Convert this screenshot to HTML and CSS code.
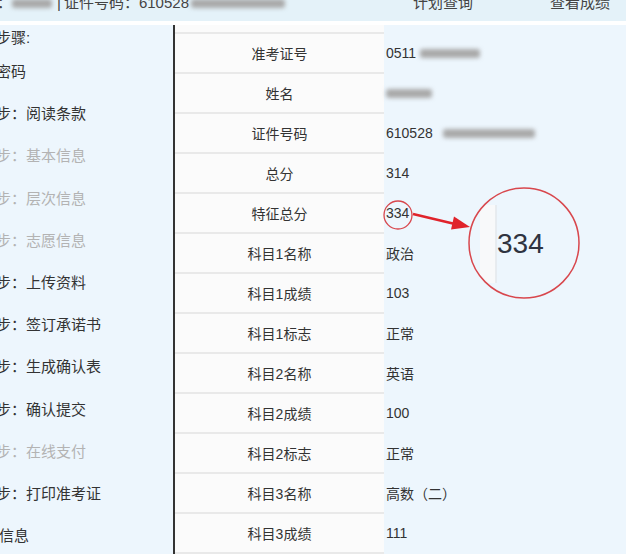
FILE: index.html
```html
<!DOCTYPE html>
<html lang="zh-CN">
<head>
<meta charset="utf-8">
<title>成绩查询</title>
<link rel="stylesheet" href="styles.css">
</head>
<body>
<div class="page">
  <header class="topbar">
    <div class="topbar-left">
      <span class="colon">：</span><span class="blur b-name"></span><span class="sep">|</span><span>证件号码：610528</span><span class="blur b-id"></span>
    </div>
    <nav class="topnav"><span>计划查询</span><span>查看成绩</span></nav>
  </header>
  <div class="gap"></div>
  <div class="content">
    <aside class="sidebar">
      <div class="sidebar-title">步骤:</div>
      <div class="step">密码</div>
      <div class="step">步：阅读条款</div>
      <div class="step off">步：基本信息</div>
      <div class="step off">步：层次信息</div>
      <div class="step off">步：志愿信息</div>
      <div class="step">步：上传资料</div>
      <div class="step">步：签订承诺书</div>
      <div class="step">步：生成确认表</div>
      <div class="step">步：确认提交</div>
      <div class="step off">步：在线支付</div>
      <div class="step">步：打印准考证</div>
      <div class="step last">信息</div>
    </aside>
    <section class="table">
      <div class="label"></div><div class="value"></div>
      <div class="label">准考证号</div><div class="value">0511<span class="blur b-v1"></span></div>
      <div class="label">姓名</div><div class="value"><span class="blur b-v2"></span></div>
      <div class="label">证件号码</div><div class="value">610528<span class="blur b-v3"></span></div>
      <div class="label">总分</div><div class="value">314</div>
      <div class="label">特征总分</div><div class="value">334</div>
      <div class="label">科目1名称</div><div class="value">政治</div>
      <div class="label">科目1成绩</div><div class="value">103</div>
      <div class="label">科目1标志</div><div class="value">正常</div>
      <div class="label">科目2名称</div><div class="value">英语</div>
      <div class="label">科目2成绩</div><div class="value">100</div>
      <div class="label">科目2标志</div><div class="value">正常</div>
      <div class="label">科目3名称</div><div class="value">高数（二）</div>
      <div class="label">科目3成绩</div><div class="value">111</div>
    </section>
  </div>
  <svg class="annot" width="626" height="554" viewBox="0 0 626 554">
    <defs><clipPath id="lens"><circle cx="524" cy="243" r="54"/></clipPath></defs>
    <g clip-path="url(#lens)">
      <rect x="480" y="205" width="16" height="78" fill="#f8f9fa"/>
      <line x1="496" y1="205" x2="496" y2="283" stroke="#e3e7eb" stroke-width="1.5"/>
      <text class="lens-text" x="497" y="253">334</text>
    </g>
    <circle cx="524" cy="243" r="55" fill="none" stroke="#d8474d" stroke-width="1.5"/>
    <circle cx="398" cy="215" r="14" fill="none" stroke="#d8474d" stroke-width="1.3"/>
    <line x1="413" y1="214" x2="455" y2="224" stroke="#e0232b" stroke-width="2.5"/>
    <polygon points="470,227 451,229.5 454,216.5" fill="#e0232b"/>
  </svg>
</div>
</body>
</html>
```
FILE: styles.css
```css
html, body {
  margin: 0;
  padding: 0;
}
body {
  width: 626px;
  height: 554px;
  overflow: hidden;
  background: #edf6fd;
  font-family: "Liberation Sans", "Noto Sans CJK SC", sans-serif;
  font-size: 14px;
  color: #333;
}
.page {
  position: relative;
  width: 626px;
  height: 554px;
  overflow: hidden;
}
.topbar {
  height: 21px;
  background: #e4f2f9;
  display: flex;
  overflow: hidden;
  color: #444;
  font-size: 15px;
}
.topbar-left,
.topnav {
  margin-top: -7px;
  height: 20px;
  line-height: 20px;
  display: flex;
  align-items: center;
  white-space: nowrap;
}
.colon {
  margin-left: -3px;
}
.sep {
  margin: 0 3px 0 5px;
}
.blur {
  display: inline-block;
  height: 9px;
  background: #a9a9a9;
  filter: blur(2px);
  border-radius: 3px;
}
.b-name {
  width: 40px;
  margin-left: 0;
}
.b-id {
  width: 94px;
  margin-left: 2px;
}
.topnav {
  margin-left: auto;
  gap: 77px;
  padding-right: 16px;
}
.gap {
  height: 4px;
  background: #fff;
}
.content {
  display: flex;
  height: 529px;
}
.sidebar {
  flex: none;
  width: 173px;
  border-right: 2px solid #333;
  background: #edf6fd;
  overflow: hidden;
  white-space: nowrap;
  font-size: 15px;
}
.sidebar-title {
  line-height: 26px;
  margin-left: -4px;
}
.step {
  line-height: 42.2px;
  margin-left: -4px;
}
.step.off {
  color: #b3b3b3;
}
.step.last {
  margin-left: -1px;
}
.table {
  flex: 1;
  display: grid;
  grid-template-columns: 209px 1fr;
  grid-template-rows: 9px;
  grid-auto-rows: 40px;
  align-content: start;
}
.label {
  box-sizing: border-box;
  background: #fbfbfb;
  border-bottom: 2px solid #e9e9e9;
  display: flex;
  align-items: center;
  justify-content: center;
}
.value {
  box-sizing: border-box;
  display: flex;
  align-items: center;
  padding: 0 0 2px 2px;
  white-space: nowrap;
}
.b-v1 {
  width: 60px;
  margin-left: 4px;
}
.b-v2 {
  width: 46px;
}
.b-v3 {
  width: 92px;
  margin-left: 10px;
}
.annot {
  position: absolute;
  left: 0;
  top: 0;
  pointer-events: none;
}
.lens-text {
  font-family: "Liberation Sans", sans-serif;
  font-size: 28px;
  fill: #2f3340;
}
```
